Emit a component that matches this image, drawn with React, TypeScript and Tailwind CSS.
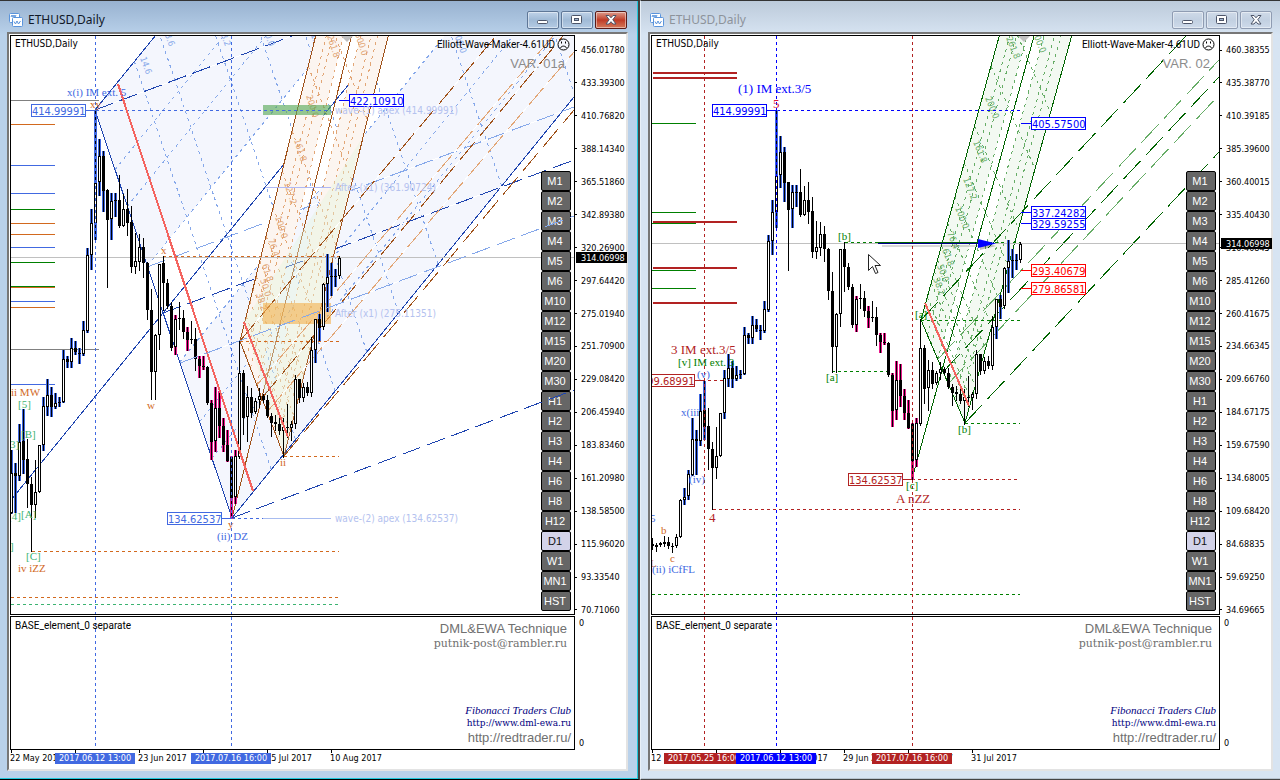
import React from 'react';

const UI = "font-['DejaVu_Sans_Condensed','Noto_Sans',sans-serif]";
const LABEL = "font-['Roboto','Noto_Sans',sans-serif]";
const ARIAL = "font-['Liberation_Sans',Arial,sans-serif]";
const SERIF = "font-['Liberation_Serif',serif]";
const BOOK = "font-['DejaVu_Serif',serif]";

const BLUE = '#4169e1';
const NAVY = '#1f45b0';
const SKY = '#86a8ea';
const ORANGE = '#d2691e';
const BROWN = '#a0521a';
const PEACH = '#e2a676';
const SEA = '#3cb371';
const GREEN = '#008000';
const DKGREEN = '#006400';
const LTGREEN = '#66ad66';
const RED = '#b22222';
const PURE = '#0000ff';

const FRAMES = ['M1', 'M2', 'M3', 'M4', 'M5', 'M6', 'M10', 'M12', 'M15', 'M20', 'M30', 'H1', 'H2', 'H3', 'H4', 'H6', 'H8', 'H12', 'D1', 'W1', 'MN1', 'HST'];

type Mark = 'b' | 'p' | '';
// high, body top, body bottom, low, hollow, highlight
type Candle = [number, number, number, number, 0 | 1, Mark];

const CANDLES: Candle[] = [
  [450, 473, 513, 513, 1, 'b'],
  [463, 473, 476, 512, 0, 'b'],
  [424, 442, 476, 480, 1, 'b'],
  [409, 441, 460, 473, 0, 'b'],
  [439, 459, 484, 507, 0, ''],
  [477, 484, 505, 551, 0, ''],
  [460, 492, 505, 517, 1, ''],
  [445, 445, 492, 492, 1, ''],
  [397, 406, 445, 450, 1, 'b'],
  [379, 395, 407, 415, 1, 'b'],
  [387, 395, 407, 416, 0, 'b'],
  [393, 403, 407, 408, 1, 'b'],
  [397, 402, 403, 406, 0, 'b'],
  [350, 359, 402, 402, 1, 'b'],
  [356, 359, 362, 367, 0, 'b'],
  [338, 348, 362, 367, 1, 'b'],
  [341, 348, 352, 354, 0, 'b'],
  [348, 353, 354, 363, 0, 'b'],
  [321, 330, 354, 355, 1, 'b'],
  [248, 255, 331, 332, 1, 'b'],
  [209, 223, 255, 269, 1, 'b'],
  [110, 183, 223, 239, 1, 'b'],
  [139, 156, 182, 195, 1, 'b'],
  [151, 156, 191, 211, 0, 'b'],
  [189, 190, 220, 287, 0, ''],
  [193, 201, 219, 239, 1, 'b'],
  [193, 200, 201, 216, 0, 'b'],
  [175, 200, 226, 227, 0, ''],
  [194, 209, 226, 226, 1, ''],
  [189, 209, 223, 235, 0, ''],
  [206, 222, 267, 272, 0, ''],
  [233, 261, 267, 273, 1, ''],
  [234, 247, 262, 270, 1, ''],
  [238, 247, 263, 277, 0, ''],
  [262, 263, 310, 319, 0, ''],
  [289, 310, 372, 399, 0, ''],
  [334, 335, 372, 399, 1, ''],
  [264, 264, 335, 349, 1, ''],
  [256, 263, 283, 310, 0, ''],
  [279, 283, 306, 308, 0, ''],
  [302, 306, 348, 350, 0, ''],
  [315, 319, 347, 354, 1, 'p'],
  [302, 318, 319, 329, 0, ''],
  [310, 318, 332, 338, 0, ''],
  [327, 332, 340, 350, 0, 'p'],
  [321, 339, 340, 343, 0, ''],
  [328, 339, 359, 370, 0, ''],
  [356, 359, 366, 377, 0, 'p'],
  [356, 366, 367, 369, 0, 'p'],
  [366, 367, 403, 404, 0, ''],
  [400, 403, 442, 459, 0, 'p'],
  [387, 408, 441, 451, 1, 'p'],
  [391, 408, 426, 437, 0, 'p'],
  [418, 426, 445, 451, 0, 'p'],
  [430, 445, 461, 461, 0, 'p'],
  [456, 457, 498, 518, 0, 'p'],
  [450, 456, 497, 503, 1, 'p'],
  [341, 373, 457, 458, 1, ''],
  [370, 373, 418, 434, 0, ''],
  [386, 397, 417, 441, 1, ''],
  [388, 397, 413, 417, 0, ''],
  [398, 401, 412, 413, 1, ''],
  [388, 396, 400, 407, 1, ''],
  [394, 396, 400, 402, 0, ''],
  [395, 400, 416, 417, 0, ''],
  [413, 416, 423, 436, 0, ''],
  [415, 422, 424, 430, 0, ''],
  [415, 424, 431, 434, 0, ''],
  [418, 427, 431, 457, 1, ''],
  [404, 427, 428, 437, 0, ''],
  [421, 424, 428, 440, 1, ''],
  [375, 379, 424, 428, 1, ''],
  [379, 379, 398, 402, 0, ''],
  [383, 387, 398, 401, 1, ''],
  [382, 387, 393, 395, 0, ''],
  [337, 350, 393, 396, 1, ''],
  [319, 319, 350, 362, 1, 'b'],
  [314, 319, 328, 340, 0, 'b'],
  [283, 284, 327, 329, 1, ''],
  [254, 277, 284, 311, 1, 'b'],
  [263, 276, 277, 295, 0, 'b'],
  [269, 276, 277, 286, 0, 'b'],
  [256, 258, 276, 278, 1, ''],
];

const EARLY: Candle[] = [
  [538, 544, 546, 549, 0, ''],
  [543, 545, 547, 551, 0, ''],
  [542, 543, 545, 546, 0, ''],
  [536, 542, 544, 546, 1, ''],
  [537, 542, 546, 548, 0, ''],
  [543, 546, 547, 552, 0, ''],
  [534, 537, 546, 547, 1, ''],
  [499, 500, 537, 537, 1, ''],
  [488, 497, 500, 504, 1, 'b'],
  [470, 474, 496, 499, 1, 'b'],
];

const same = (y: number) => y;
const wider = (y: number) => Math.round(55.75 + 0.9051 * (y - 50));

const Candles: React.FC<{ data: Candle[]; x0: number; scale: (y: number) => number }> = ({ data, x0, scale }) => (
  <g shapeRendering="crispEdges">
    {data.map(([h, t, b, l, hollow, mark], i) => {
      const x = x0 + i * 4;
      const [hi, top, bot, lo] = [h, t, b, l].map(scale);
      const body = Math.max(bot - top, 1);
      return (
        <g key={i}>
          {mark && <rect x={x - 1} y={hi} width={3} height={lo - hi + 1} fill={mark === 'b' ? BLUE : '#e8188a'} />}
          <rect x={x} y={hi} width={1} height={lo - hi + 1} fill="#000" />
          <rect x={x - 1} y={top} width={3} height={body} fill="#000" />
          {hollow === 1 && body > 2 && <rect x={x} y={top + 1} width={1} height={body - 2} fill="#fff" />}
        </g>
      );
    })}
  </g>
);

interface LineProps {
  p: number[];
  c: string;
  w?: number;
  dash?: string;
}

const Line: React.FC<LineProps> = ({ p, c, w = 1, dash }) => (
  <line x1={p[0]} y1={p[1]} x2={p[2]} y2={p[3]} stroke={c} strokeWidth={w} strokeDasharray={dash} shapeRendering="crispEdges" />
);

const HLine: React.FC<{ x1: number; x2: number; y: number; c: string; w?: number; dash?: string }> = ({ x1, x2, y, c, w = 1, dash }) => (
  <Line p={[x1, w === 1 ? y + 0.5 : y, x2, w === 1 ? y + 0.5 : y]} c={c} w={w} dash={dash} />
);

const Ray: React.FC<LineProps> = ({ p, c, dash = '19 7' }) => (
  <>
    <Line p={p} c="#fff" />
    <Line p={p} c={c} dash={dash} />
  </>
);

const Tag: React.FC<{ x: number; y: number; c: string; text: string; stem?: 'l' | 'r'; len?: number }> = ({ x, y, c, text, stem, len = 10 }) => (
  <g>
    {stem === 'r' && <HLine x1={x + 54} x2={x + 54 + len} y={y} c={c} />}
    {stem === 'l' && <HLine x1={x - len} x2={x} y={y} c={c} />}
    <rect x={x + 0.5} y={y - 5.5} width={54} height={12} fill="#fff" stroke={c} />
    <text x={x + 1} y={y + 5} fill={c} className={`text-[11px] ${UI}`}>{text}</text>
  </g>
);

const Wave: React.FC<{ x: number; y: number; c: string; text: string; big?: boolean }> = ({ x, y, c, text, big }) => (
  <text x={x} y={y} fill={c} className={big ? `text-[13px] ${SERIF}` : `text-[11px] ${SERIF}`}>{text}</text>
);

interface ForkProps {
  a: number[];
  b: number[];
  c: number[];
  slope: number;
  color: string;
  soft: string;
  fill: string;
  unit: number;
  levels: number[];
}

// channel drawn from the b-c base, every side running up with the same slope (dx per dy)
const Fork: React.FC<ForkProps> = ({ a, b, c, slope, color, soft, fill, unit, levels }) => {
  const base = (t: number) => [b[0] + (c[0] - b[0]) * t, b[1] + (c[1] - b[1]) * t];
  const up = (p: number[], y = 30) => [p[0] + (p[1] - y) * slope, y];
  const band = (t1: number, t2: number) => [base(t1), up(base(t1)), up(base(t2)), base(t2)].map((p) => p.join(',')).join(' ');
  return (
    <g>
      <polygon points={band(0, 0.382)} fill={fill} />
      <polygon points={band(0.618, 1)} fill={fill} />
      {[0.146, 0.236, 0.382, 0.618, 0.764, 0.854].map((t) => (
        <Line key={t} p={[...base(t), ...up(base(t))]} c={soft} dash="3 4" />
      ))}
      {levels.map((k) => (
        <Line key={k} p={[b[0] + unit * k * slope, b[1] - unit * k, c[0] + unit * k * slope, c[1] - unit * k]} c={soft} dash="3 4" />
      ))}
      <Line p={[...b, ...c]} c={color} />
      <Line p={[...b, ...up(b)]} c={color} />
      <Line p={[...a, ...up(a)]} c={color} />
      <Line p={[...c, ...up(c)]} c={color} />
    </g>
  );
};

const Levels: React.FC<{ items: [number, number, string][]; c: string; angle: number }> = ({ items, c, angle }) => (
  <>
    {items.map(([x, y, t]) => (
      <text key={`${x}-${y}`} x={x} y={y} fill={c} transform={`rotate(${angle} ${x} ${y})`} className={`text-[9px] ${UI}`}>{t}</text>
    ))}
  </>
);

const LeftDrawing = () => (
  <g transform="translate(-11 -36)">
    <Fork a={[163, 313]} b={[95, 110]} c={[232, 518]} slope={0.8123} color={NAVY} soft={SKY} fill="#f4f6fd" unit={332} levels={[0.146, 0.236, 0.382, 0.5, 0.618, 0.764, 1, 1.272]} />
    <Line p={[11, 500, 163, 313]} c={NAVY} />
    <Ray p={[95, 110, 292, 36]} c={NAVY} />
    <Ray p={[163, 313, 574, 160]} c={NAVY} />
    <Ray p={[232, 518, 574, 390]} c={NAVY} />
    <Ray p={[147, 267, 574, 107]} c={SKY} />
    <Ray p={[180, 363, 574, 216]} c={SKY} />
    <Levels angle={70} c={SKY} items={[[140, 58, '14.6'], [163, 30, '23.6'], [219, 30, '38.2'], [263, 30, '50.0'], [309, 30, '61.8'], [371, 30, '76.4'], [453, 32, '100.0']]} />

    <Fork a={[232, 518]} b={[240, 341]} c={[284, 456]} slope={0.248} color={BROWN} soft={PEACH} fill="#fcf5f0" unit={105} levels={[0.236, 0.382, 0.5, 0.618, 0.764, 1, 1.272, 1.618, 2, 2.618, 3.2]} />
    <polygon points="361,140 244,322 284,456" fill="#e4f6dc" opacity="0.4" />
    <Levels angle={72} c={PEACH} items={[[306, 96, '200.0'], [294, 140, '161.8'], [284, 183, '127.2'], [275, 217, '100.0'], [268, 240, '76.4'], [262, 265, '61.8'], [260, 280, '50.0'], [256, 294, '38.2'], [327, 36, '261.8'], [355, 34, '300.0']]} />
    <Ray p={[240, 341, 496, 36]} c={BROWN} dash="23 8" />
    <Ray p={[262, 398, 563, 36]} c={BROWN} dash="23 8" />
    <Ray p={[284, 456, 574, 110]} c={BROWN} dash="23 8" />
    <Ray p={[257, 385, 553, 36]} c={PEACH} dash="23 8" />
    <Ray p={[267, 412, 574, 52]} c={PEACH} dash="23 8" />

    <HLine x1={11} x2={574} y={257} c="#c0c0c0" />
    {[124, 223, 234, 287, 307].map((y) => <HLine key={y} x1={11} x2={55} y={y} c={ORANGE} />)}
    {[165, 193, 247, 301, 384].map((y) => <HLine key={y} x1={11} x2={55} y={y} c={BLUE} />)}
    {[209, 262, 286].map((y) => <HLine key={y} x1={11} x2={55} y={y} c={GREEN} />)}
    {[100, 349].map((y) => <HLine key={y} x1={11} x2={99} y={y} c="#808080" />)}
    <rect x={263} y={105} width={68} height={10} fill="#5cab5c" opacity="0.65" />
    <rect x={263} y={303} width={68} height={21} fill="#f4b04c" opacity="0.6" />
    <HLine x1={96} x2={331} y={110} c={BLUE} dash="3 3" />
    <HLine x1={265} x2={331} y={187} c="#b0b8f4" />
    <HLine x1={232} x2={263} y={518} c={BLUE} dash="3 3" />
    <HLine x1={263} x2={331} y={518} c="#a8bcf0" />
    <HLine x1={163} x2={339} y={256} c={ORANGE} dash="3 3" />
    <HLine x1={240} x2={339} y={341} c={ORANGE} dash="3 3" />
    <HLine x1={284} x2={339} y={456} c={ORANGE} dash="3 3" />
    <HLine x1={32} x2={339} y={551} c={ORANGE} dash="3 3" />
    <HLine x1={11} x2={339} y={597} c={ORANGE} dash="3 3" />
    <HLine x1={11} x2={339} y={604} c={SEA} dash="3 3" />

    <Candles data={CANDLES} x0={11} scale={same} />
    <Line p={[118, 84, 253, 491]} c="#f4645f" w={2} />
    <Line p={[244, 322, 288, 437]} c="#f4645f" w={2} />
    <Line p={[95.5, 36, 95.5, 614]} c={BLUE} dash="3 3" />
    <Line p={[231.5, 36, 231.5, 614]} c={BLUE} dash="3 3" />

    <Tag x={31} y={110} c={BLUE} text="414.99991" stem="r" />
    <Tag x={167} y={518} c={BLUE} text="134.62537" stem="r" />
    <Tag x={349} y={100} c={PURE} text="422.10910" stem="l" />
    <g fill="#b4c2ef" className={`text-[10px] ${UI}`}>
      <text x={335} y={114}>wave-(1) apex (414.99991)</text>
      <text x={335} y={191}>After (x1) (361.90724)</text>
      <text x={335} y={317}>After (x1) (275.11351)</text>
      <text x={335} y={522}>wave-(2) apex (134.62537)</text>
    </g>
    <Wave x={67} y={96} c={BLUE} text="x(i) IM ext. 5" />
    <Wave x={90} y={108} c={ORANGE} text="xy" />
    <Wave x={11} y={396} c={ORANGE} text="ii MW" />
    <Wave x={18} y={408} c={SEA} text="[5]" />
    <Wave x={21} y={438} c={SEA} text="[B]" />
    <Wave x={10} y={448} c={SEA} text="3]" />
    <Wave x={8} y={520} c={SEA} text="[4]" />
    <Wave x={21} y={518} c={SEA} text="[A]" />
    <Wave x={10} y={550} c={SEA} text="]" />
    <Wave x={26} y={560} c={SEA} text="[C]" />
    <Wave x={18} y={572} c={ORANGE} text="iv iZZ" />
    <Wave x={147} y={409} c={ORANGE} text="w" />
    <Wave x={161} y={254} c={ORANGE} text="x" />
    <Wave x={280} y={466} c={ORANGE} text="ii" />
    <Wave x={228} y={528} c={ORANGE} text="y" />
    <Wave x={217} y={540} c={BLUE} text="(ii) DZ" />
    <polygon points="341,36 353,36 347,42" fill="#c0c0c0" />
  </g>
);

const RightDrawing = () => (
  <g transform="translate(-652 -36)">
    <Fork a={[912, 479]} b={[921, 320]} c={[965, 423]} slope={0.2755} color={DKGREEN} soft={LTGREEN} fill="#f3f9f2" unit={97} levels={[0.236, 0.382, 0.5, 0.618, 0.764, 1, 1.272, 1.618, 2, 2.618, 3.2]} />
    <Levels angle={68} c={LTGREEN} items={[[1006, 38, '261.8'], [1032, 32, '300.0'], [985, 98, '200.0'], [973, 142, '161.8'], [963, 179, '127.2'], [955, 208, '100.0'], [947, 233, '76.4'], [942, 250, '61.8'], [937, 266, '50.0'], [933, 279, '38.2']]} />
    <Line p={[921, 320, 1186, 36]} c={DKGREEN} dash="25 8" />
    <Line p={[943, 372, 1219, 77]} c={DKGREEN} dash="25 8" />
    <Line p={[965, 423, 1219, 152]} c={DKGREEN} dash="25 8" />
    <Line p={[938, 359, 1219, 60]} c={LTGREEN} dash="25 8" />
    <Line p={[948, 384, 1219, 95]} c={LTGREEN} dash="25 8" />

    <HLine x1={652} x2={1219} y={243} c="#c0c0c0" />
    {[123, 212, 223, 270, 288].map((y) => <HLine key={y} x1={652} x2={696} y={y} c={GREEN} />)}
    {[73, 78, 222, 268, 303].map((y) => <HLine key={y} x1={653} x2={737} y={y} c={RED} w={2} />)}
    <HLine x1={777} x2={1020} y={110} c={PURE} dash="3 3" />
    <HLine x1={845} x2={1020} y={242} c={GREEN} dash="3 3" />
    <HLine x1={832} x2={888} y={371} c={GREEN} dash="3 3" />
    <HLine x1={921} x2={1020} y={320} c={GREEN} dash="3 3" />
    <HLine x1={965} x2={1020} y={423} c={GREEN} dash="3 3" />
    <HLine x1={912} x2={1020} y={479} c={RED} dash="3 3" />
    <HLine x1={713} x2={1020} y={509} c={RED} dash="3 3" />
    <HLine x1={696} x2={726} y={380} c={RED} dash="3 3" />
    <HLine x1={652} x2={1020} y={594} c={GREEN} dash="3 3" />

    <Candles data={EARLY} x0={652} scale={same} />
    <Candles data={CANDLES} x0={692} scale={wider} />
    <Line p={[925, 303, 969, 406]} c="#f4645f" w={2} />
    <Line p={[704.5, 36, 704.5, 614]} c={RED} dash="3 3" />
    <Line p={[776.5, 36, 776.5, 614]} c={PURE} dash="3 3" />
    <Line p={[912.5, 36, 912.5, 614]} c={RED} dash="3 3" />

    <rect x={882} y={245} width={104} height={2} fill="#000" opacity="0.15" />
    <polygon points="980,242 996,246 980,250" fill="#000" opacity="0.25" />
    <HLine x1={878} x2={980} y={242} c={DKGREEN} />
    <HLine x1={878} x2={980} y={243} c="#00008b" />
    <polygon points="978,239 996,243.5 978,248" fill={PURE} />

    <Tag x={712} y={110} c={PURE} text="414.99991" stem="r" />
    <Tag x={640} y={380} c={RED} text="199.68991" stem="r" />
    <Tag x={848} y={479} c={RED} text="134.62537" stem="r" />
    <Tag x={1031} y={123} c={PURE} text="405.57500" stem="l" />
    <Tag x={1031} y={223} c={PURE} text="329.59255" stem="l" />
    <Tag x={1031} y={212} c={PURE} text="337.24282" stem="l" />
    <Tag x={1031} y={270} c="#ff0000" text="293.40679" stem="l" />
    <Tag x={1031} y={288} c="#ff0000" text="279.86581" stem="l" />

    <Wave big x={738} y={93} c={PURE} text="(1) IM ext.3/5" />
    <Wave big x={773} y={108} c="#dc143c" text="5" />
    <Wave big x={671} y={354} c={RED} text="3 IM ext.3/5" />
    <Wave x={678} y={366} c={GREEN} text="[v] IM ext. 3" />
    <Wave x={697} y={378} c={BLUE} text="(v)" />
    <Wave x={681} y={416} c={BLUE} text="x(iii" />
    <Wave x={689} y={483} c={BLUE} text="(iv)" />
    <Wave big x={709} y={522} c={RED} text="4" />
    <Wave x={650} y={522} c={BLUE} text="5" />
    <Wave x={661} y={534} c={ORANGE} text="b" />
    <Wave x={670} y={562} c={ORANGE} text="c" />
    <Wave x={650} y={567} c={ORANGE} text="L" />
    <Wave x={652} y={573} c={BLUE} text="(ii) iCfFL" />
    <Wave x={838} y={240} c={GREEN} text="[b]" />
    <Wave x={826} y={381} c={GREEN} text="[a]" />
    <Wave x={915} y={318} c={GREEN} text="[a]" />
    <Wave x={958} y={433} c={GREEN} text="[b]" />
    <Wave x={906} y={489} c={GREEN} text="[c]" />
    <Wave big x={896} y={503} c={RED} text="A nZZ" />
    <polygon points="1018,36 1030,36 1024,42" fill="#c0c0c0" />
    <path d="M868.5 254.5v16l4-4 3 7 2.500-1-3-7h5.500z" fill="#fff" stroke="#222" />
  </g>
);

const ChartIcon = () => (
  <svg width="14" height="14" viewBox="0 0 14 14" fill="#fff" stroke="#5a94dc" aria-hidden="true">
    <rect x="0.5" y="0.5" width="10" height="9" rx="1" />
    <path d="M2 4l1-2 1 2 1-2 1 2 1-2" fill="none" />
    <rect x="3.500" y="4.500" width="10" height="9" rx="1" />
    <path d="M5 8.500l1.500 2.500 1.500-3 1.500 3 2-3" fill="none" />
  </svg>
);

const SadFace = () => (
  <svg width="13" height="13" viewBox="0 0 13 13" fill="none" stroke="#000" aria-hidden="true">
    <circle cx="6.500" cy="6.500" r="5.500" />
    <path d="M4.500 3.500v2M8.500 3.500v2M3.500 10c1-2.500 5-2.500 6 0" />
  </svg>
);

const WindowButton: React.FC<{ kind: 'min' | 'max' | 'close'; active: boolean }> = ({ kind, active }) => {
  const look = kind === 'close' && active
    ? 'border-[#5b1a17] from-[#dc9a8c] via-[#bf3a26] to-[#d4785a]'
    : active
      ? 'border-[#5f7797] from-[#bfd2e8] via-[#a0bad6] to-[#b4cbe4]'
      : 'border-[#8f9cb2] from-[#cfdae8] via-[#c2d0e1] to-[#cedaea]';
  return (
    <button type="button" aria-label={kind} className={`flex h-[18px] w-8 items-center justify-center rounded-[2px] border bg-linear-to-b shadow-[inset_0_0_0_1px_rgba(255,255,255,0.45)] ${look}`}>
      <svg width="12" height="10" viewBox="0 0 12 10" fill="#fff" stroke="#4c5468" aria-hidden="true">
        {kind === 'min' && <rect x="0.5" y="5.500" width="10" height="3" rx="1" />}
        {kind === 'max' && (
          <>
            <rect x="0.5" y="0.5" width="10" height="8" rx="1" />
            <rect x="3.500" y="3.500" width="4" height="2" fill="#9fb4cf" />
          </>
        )}
        {kind === 'close' && <path d="M1 .5h3l2 2.300 2-2.300h3L7.800 4.700 11 9H8L6 6.700 4 9H1l3.200-4.300z" />}
      </svg>
    </button>
  );
};

interface ChartWindowProps {
  active: boolean;
  variant: string;
  prices: string[];
  dates: string[];
  tagTop: string;
  drawing: React.ReactNode;
  overlay?: React.ReactNode;
  sub: { x: number; c: string }[];
  stamps: { left: string; text: string; bg: string }[];
}

const ChartWindow: React.FC<ChartWindowProps> = ({ active, variant, prices, dates, tagTop, drawing, overlay, sub, stamps }) => (
  <section
    className={`flex w-1/2 flex-col border-t border-t-[#333] bg-linear-to-b to-[34px] ${
      active
        ? 'border-r-2 border-r-[#444] border-b border-b-black from-[#98b2d0] to-[#b9d1ea]'
        : 'border-l border-l-[#e8f0f8] border-b border-b-[#444] from-[#bccada] to-[#d7e4f2]'
    }`}
  >
    <div className={`flex flex-1 flex-col pb-[7px] pl-[7px] ${active ? 'border-r border-b border-[#20c8dc] pr-[9px]' : 'border-b border-b-[#b8c4d0] pr-[7px]'}`}>
      <header className="flex h-[31px] items-center gap-1 pt-[6px] pr-px pl-[2px]">
        <ChartIcon />
        <h1 className={`flex-1 pl-px text-[12px] font-['Noto_Sans',sans-serif] ${active ? 'text-[#101828]' : 'text-[#8d939b]'}`}>ETHUSD,Daily</h1>
        <div className="flex gap-[2px]">
          <WindowButton kind="min" active={active} />
          <WindowButton kind="max" active={active} />
          <WindowButton kind="close" active={active} />
        </div>
      </header>

      <div className="flex flex-1 flex-col border-2 border-t-[#777] border-r-[#e3e3e3] border-b-[#e3e3e3] border-l-[#777] bg-white pt-px pl-px">
        <div className="flex min-h-[480px] flex-1">
          <div className="relative flex min-w-0 flex-1 justify-between overflow-hidden border border-black">
            <svg className="absolute inset-0 h-full w-full">{drawing}</svg>
            <div className={`relative pt-[2px] pl-1 text-[10px] leading-3 ${UI}`}>ETHUSD,Daily</div>
            <div className="relative flex flex-col items-end">
              <div className={`flex items-center gap-[2px] pt-[2px] pr-1 text-[10px] leading-3 ${LABEL}`}>
                Elliott-Wave-Maker-4.61UD
                <SadFace />
              </div>
              <div className={`pt-[5px] pr-[9px] text-[13px] leading-4 text-[#8c8c8c] ${ARIAL}`}>{variant}</div>
              <div className={`mt-[99px] mr-[3px] flex w-[30px] flex-col text-[11px] ${ARIAL}`}>
                {FRAMES.map((f) => (
                  <button
                    key={f}
                    type="button"
                    className={`flex h-5 items-center justify-center rounded-[2px] border border-black pr-[2px] ${f === 'D1' ? 'bg-[#d3d3e9] text-[#111]' : 'bg-[#666] text-white'}`}
                  >
                    {f}
                  </button>
                ))}
              </div>
            </div>
            {overlay && <svg className="pointer-events-none absolute inset-0 h-full w-full">{overlay}</svg>}
          </div>
          <div className={`relative flex w-[51px] flex-col justify-between pt-[10px] text-[9px] leading-[10px] ${UI}`}>
            {prices.map((p) => (
              <div key={p} className="flex items-center gap-1">
                <i className="h-px w-[2px] bg-black" />
                {p}
              </div>
            ))}
            <div className={`absolute -right-px left-px flex h-[11px] items-center bg-black pl-[5px] text-white ${tagTop}`}>314.06998</div>
          </div>
        </div>

        <div className="mt-px flex h-[134px]">
          <div className="relative flex flex-1 justify-between overflow-hidden border border-black">
            <svg className="absolute inset-0 h-full w-full">
              {sub.map((s) => <Line key={s.x} p={[s.x + 0.5, 0, s.x + 0.5, 130]} c={s.c} dash="3 3" />)}
            </svg>
            <div className={`relative pt-[3px] pl-1 text-[10px] leading-3 ${LABEL}`}>BASE_element_0 separate</div>
            <div className="relative flex flex-col items-end justify-between py-1">
              <div className="flex flex-col items-end pr-[7px] text-[#707070]">
                <span className={`text-[13px] leading-4 ${ARIAL}`}>DML&amp;EWA Technique</span>
                <span className={`text-[11px] leading-[14px] ${BOOK}`}>putnik-post@rambler.ru</span>
              </div>
              <div className="flex flex-col items-end pr-[3px] text-[#000080]">
                <span className={`text-[11px] leading-[14px] italic ${SERIF}`}>Fibonacci Traders Club</span>
                <a href="http://www.dml-ewa.ru" className={`text-[9px] leading-[13px] ${BOOK}`}>http://www.dml-ewa.ru</a>
                <a href="http://redtrader.ru/" className={`text-[13px] leading-[15px] text-[#707070] ${ARIAL}`}>http://redtrader.ru/</a>
              </div>
            </div>
          </div>
          <div className={`flex w-[51px] flex-col justify-between py-[2px] pl-1 text-[9px] leading-[10px] ${UI}`}>
            <span>0</span>
            <span>0</span>
          </div>
        </div>

        <div className={`relative flex h-[19px] overflow-hidden text-[9px] leading-[11px] ${UI}`}>
          {dates.map((d) => (
            <div key={d} className="w-16 shrink-0 whitespace-nowrap">
              <i className="ml-px block h-[3px] w-px bg-black" />
              {d}
            </div>
          ))}
          {stamps.map((s) => (
            <div key={s.text} className={`absolute top-[3px] flex h-[11px] w-20 items-center justify-center text-white ${s.left} ${s.bg}`}>{s.text}</div>
          ))}
        </div>
      </div>
    </div>
  </section>
);

const LEFT_PRICES = ['456.01780', '433.39300', '410.76820', '388.14340', '365.51860', '342.89380', '320.26900', '297.64420', '275.01940', '251.70900', '229.08420', '206.45940', '183.83460', '161.20980', '138.58500', '115.96020', '93.33540', '70.71060'];
const RIGHT_PRICES = ['460.38355', '435.38770', '410.39185', '385.39600', '360.40015', '335.40430', '310.40845', '285.41260', '260.41675', '234.66345', '209.66760', '184.67175', '159.67590', '134.68005', '109.68420', '84.68835', '59.69250', '34.69665'];

const App: React.FC = () => (
  <main className="flex min-h-screen min-w-[1180px] bg-[#b9d1ea] text-black">
    <ChartWindow
      active
      variant="VAR. 01a"
      prices={LEFT_PRICES}
      dates={['22 May 2017', '7 Jun 2017', '23 Jun 2017', '9 Jul 2017', '25 Jul 2017', '10 Aug 2017']}
      tagTop="top-[217px]"
      drawing={<LeftDrawing />}
      overlay={
        <g transform="translate(-11 -36)">
          <Line p={[232, 518, 574, 390]} c={NAVY} dash="19 7" />
          <Line p={[180, 363, 574, 216]} c={SKY} dash="19 7" />
        </g>
      }
      sub={[{ x: 84, c: BLUE }, { x: 220, c: BLUE }]}
      stamps={[
        { left: 'left-[45px]', text: '2017.06.12 13:00', bg: 'bg-[#4169e1]' },
        { left: 'left-[181px]', text: '2017.07.16 16:00', bg: 'bg-[#4169e1]' },
      ]}
    />
    <ChartWindow
      active={false}
      variant="VAR. 02"
      prices={RIGHT_PRICES}
      dates={['12 May 2017', '28 May 2017', '13 Jun 2017', '29 Jun 2017', '15 Jul 2017', '31 Jul 2017']}
      tagTop="top-[203px]"
      drawing={<RightDrawing />}
      sub={[{ x: 52, c: RED }, { x: 124, c: PURE }, { x: 260, c: RED }]}
      stamps={[
        { left: 'left-[13px]', text: '2017.05.25 16:00', bg: 'bg-[#b22222]' },
        { left: 'left-[85px]', text: '2017.06.12 13:00', bg: 'bg-[#0000ff]' },
        { left: 'left-[221px]', text: '2017.07.16 16:00', bg: 'bg-[#b22222]' },
      ]}
    />
  </main>
);

export default App;
